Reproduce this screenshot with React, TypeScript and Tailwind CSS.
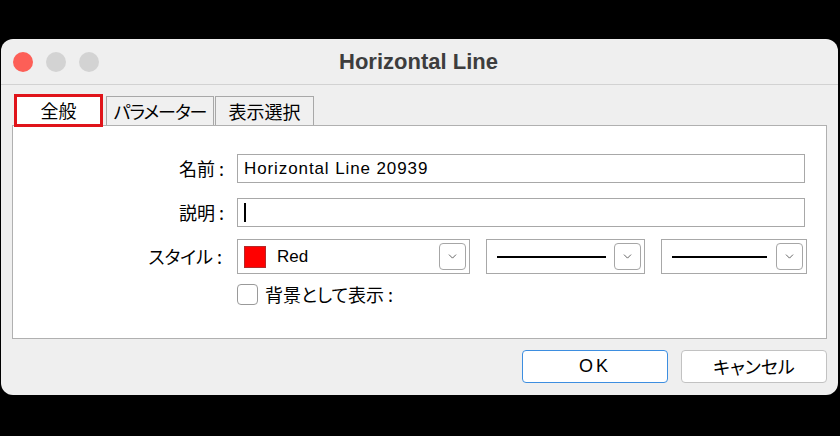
import { ChevronDown } from 'lucide-react';

const jp = "font-['Noto_Sans_CJK_JP','Noto_Sans',sans-serif] [font-feature-settings:'palt']";

function DropButton() {
    return (
        <div className="flex size-[27px] items-center justify-center rounded-[4px] border border-[#a6a6a6] bg-white">
            <ChevronDown className="size-[13px] text-[#444]" strokeWidth={1.5} />
        </div>
    );
}

function LineCombo({ width, lineWidth }: { width: string; lineWidth: string }) {
    return (
        <div className={`flex h-[35px] items-center justify-between border border-[#a8a8a8] bg-white pr-[3px] pl-[10px] ${width}`}>
            <div className={`h-[2px] bg-black ${lineWidth}`} />
            <DropButton />
        </div>
    );
}

export default function App() {
    return (
        <div className={`h-[436px] w-[840px] overflow-hidden bg-black pt-[39px] ${jp}`}>
            <div className="ml-[1px] flex h-[356px] w-[837px] flex-col rounded-[12px] bg-[#efefef]">
                {/* title bar */}
                <div className="relative flex h-[46px] items-center border-b border-[#d2d2d2] pl-[12px]">
                    <div className="flex gap-[13px]">
                        <span className="size-[20px] rounded-full bg-[#fd5f57]" />
                        <span className="size-[20px] rounded-full bg-[#d3d3d3]" />
                        <span className="size-[20px] rounded-full bg-[#d3d3d3]" />
                    </div>
                    <div className="flex-1 pr-[100px] text-center font-['Liberation_Sans',Arial,sans-serif] text-[22px] font-bold text-[#3d3d3d]">
                        Horizontal Line
                    </div>
                </div>

                <div className="flex flex-1 flex-col px-[11px] pt-[9px]">
                    {/* tabs */}
                    <div className="relative z-10 -mb-[2px] flex h-[33px] items-start pl-[2px] text-[18px] leading-none text-black">
                        <div className="flex h-[33px] w-[89px] items-center justify-center border-[3px] border-[#e0141a] bg-white pb-[2px]">
                            全般
                        </div>
                        <div className="mt-[2px] ml-[3px] flex h-[29px] w-[108px] items-center justify-center border border-b-0 border-[#a8a8a8] bg-[#f0f0f0] tracking-[-1px]">
                            パラメーター
                        </div>
                        <div className="mt-[2px] ml-[1px] flex h-[29px] w-[99px] items-center justify-center border border-b-0 border-[#a8a8a8] bg-[#f0f0f0]">
                            表示選択
                        </div>
                    </div>

                    {/* panel */}
                    <div className="flex h-[214px] flex-col border border-[#b0b0b0] bg-white pt-[28px] text-[18px] text-black">
                        <div className="flex h-[29px] items-center">
                            <div className="w-[212px] pr-[1px] text-right">名前 :</div>
                            <div className="ml-[12px] flex h-[29px] w-[568px] items-center border border-[#a8a8a8] pl-[6px] font-['Liberation_Sans',Arial,sans-serif] text-[17px] tracking-[0.9px]">
                                Horizontal Line 20939
                            </div>
                        </div>
                        <div className="mt-[15px] flex h-[29px] items-center">
                            <div className="w-[212px] pr-[1px] text-right">説明 :</div>
                            <div className="ml-[12px] flex h-[29px] w-[568px] items-center border border-[#a8a8a8] pl-[6px]">
                                <div className="h-[19px] w-[2px] bg-black" />
                            </div>
                        </div>
                        <div className="mt-[12px] flex h-[35px] items-center">
                            <div className="w-[212px] pr-[3px] text-right">スタイル :</div>
                            <div className="ml-[12px] flex h-[35px] w-[233px] items-center border border-[#a8a8a8] pr-[3px] pl-[6px]">
                                <div className="size-[22px] border border-[#b32a2a] bg-[#ff0000]" />
                                <span className="ml-[11px] flex-1 font-['Liberation_Sans',Arial,sans-serif] text-[17px]">Red</span>
                                <DropButton />
                            </div>
                            <div className="ml-[16px]">
                                <LineCombo width="w-[159px]" lineWidth="w-[109px]" />
                            </div>
                            <div className="ml-[16px]">
                                <LineCombo width="w-[146px]" lineWidth="w-[95px]" />
                            </div>
                        </div>
                        <div className="mt-[10px] flex h-[21px] items-center pl-[224px]">
                            <div className="size-[21px] rounded-[4px] border border-[#9a9a9a] bg-white" />
                            <span className="ml-[7px]">背景として表示 :</span>
                        </div>
                    </div>

                    {/* buttons */}
                    <div className="mt-[11px] flex justify-end gap-[13px] text-[18px] text-black">
                        <button className="flex h-[33px] w-[146px] items-center justify-center rounded-[4px] border-[1.5px] border-[#3d8ee0] bg-white font-['Liberation_Sans',Arial,sans-serif] tracking-[3px]">
                            OK
                        </button>
                        <button className="flex h-[33px] w-[146px] items-center justify-center rounded-[4px] border border-[#c2c2c2] bg-white">
                            キャンセル
                        </button>
                    </div>
                </div>
            </div>
        </div>
    );
}
